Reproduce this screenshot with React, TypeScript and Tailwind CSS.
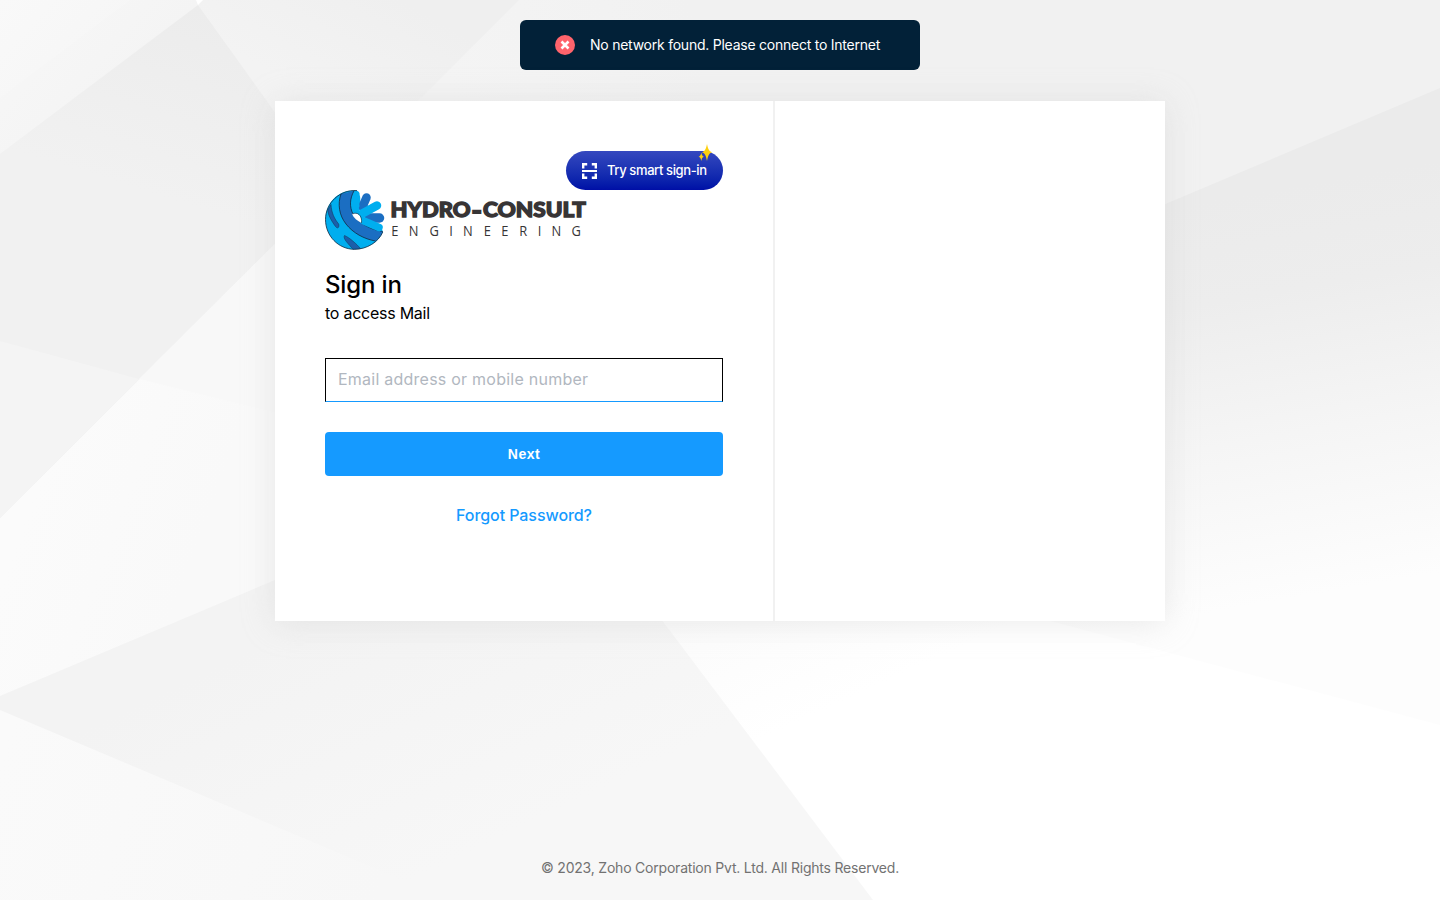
import React from "react";

function Backdrop() {
  return (
    <svg className="absolute inset-0 -z-10 h-full w-full" viewBox="0 0 1440 900" preserveAspectRatio="none" aria-hidden="true">
      <defs>
        <linearGradient id="peak" gradientUnits="userSpaceOnUse" x1="198" y1="5" x2="140" y2="190">
          <stop offset="0" stopColor="#ececec" />
          <stop offset="1" stopColor="#f1f1f1" />
        </linearGradient>
        <linearGradient id="corner" gradientUnits="userSpaceOnUse" x1="0" y1="0" x2="110" y2="100">
          <stop offset="0" stopColor="#f8f8f8" />
          <stop offset="1" stopColor="#f4f4f4" />
        </linearGradient>
        <linearGradient id="facet" gradientUnits="userSpaceOnUse" x1="400" y1="0" x2="340" y2="110">
          <stop offset="0" stopColor="#efefef" />
          <stop offset="1" stopColor="#f3f3f3" />
        </linearGradient>
        <linearGradient id="sky" gradientUnits="userSpaceOnUse" x1="450" y1="100" x2="700" y2="50">
          <stop offset="0" stopColor="#f4f4f4" />
          <stop offset="1" stopColor="#f1f1f1" />
        </linearGradient>
        <linearGradient id="right" gradientUnits="userSpaceOnUse" x1="1270" y1="190" x2="1340" y2="590">
          <stop offset="0" stopColor="#ebebeb" />
          <stop offset="0.25" stopColor="#ededed" />
          <stop offset="0.6" stopColor="#f5f5f5" />
          <stop offset="1" stopColor="#fdfdfd" />
        </linearGradient>
        <linearGradient id="lower" gradientUnits="userSpaceOnUse" x1="700" y1="610" x2="760" y2="740">
          <stop offset="0" stopColor="#fbfbfb" />
          <stop offset="1" stopColor="#ffffff" />
        </linearGradient>
        <linearGradient id="ground" gradientUnits="userSpaceOnUse" x1="250" y1="650" x2="370" y2="900">
          <stop offset="0" stopColor="#f3f3f3" />
          <stop offset="1" stopColor="#f7f7f7" />
        </linearGradient>
        <linearGradient id="leftLight" gradientUnits="userSpaceOnUse" x1="40" y1="480" x2="200" y2="540">
          <stop offset="0" stopColor="#fbfbfb" />
          <stop offset="1" stopColor="#f9f9f9" />
        </linearGradient>
        <linearGradient id="foot" gradientUnits="userSpaceOnUse" x1="0" y1="760" x2="380" y2="890">
          <stop offset="0" stopColor="#fafafa" />
          <stop offset="1" stopColor="#f7f7f7" />
        </linearGradient>
      </defs>
      <rect width="1440" height="900" fill="url(#sky)" />
      <polygon points="0,696 1440,88 1440,900 0,900" fill="url(#right)" />
      <polygon points="0,696 500,474 1440,725 1440,900 0,900" fill="url(#lower)" />
      <polygon points="0,518 330,189 500,485 0,696" fill="url(#leftLight)" />
      <polygon points="0,154 203,0 0,0" fill="url(#corner)" />
      <polygon points="0,98 130,0 0,0" fill="#ffffff" fillOpacity="0.15" />
      <polygon points="203,0 519,0 330,189 198,5" fill="url(#facet)" />
      <polygon points="0,154 198,5 330,189 0,518" fill="url(#peak)" />
      <polygon points="0,341 139,379 0,518" fill="#f4f4f4" />
      <polygon points="139,379 275,413 275,244" fill="#f8f8f8" />
      <polygon points="196,0 203,0 198,5" fill="#ffffff" />
      <polygon points="0,696 500,485 560,485 873,900 0,900" fill="url(#ground)" />
      <polygon points="0,710 450,900 0,900" fill="url(#foot)" />
    </svg>
  );
}

function Logo() {
  return (
    <svg className="block" width="262" height="60" viewBox="0 0 262 60" role="img" aria-label="Hydro-Consult Engineering">
      <path d="M30 .6C13-.2 .5 13 .5 29.500C.5 46 13.500 59.300 29.500 59.300C43 59.300 54 51.500 57.800 42L56.500 37L42 33L33 23L35 11L34.500 3C33.500 1 32 .6 30 .6Z" fill="#00aeef" />
      <path d="M29 .8L16 4C12.500 14 14 25 21 34C28 43 39 49 50.500 51C54 48.500 56.500 45 57.800 41.500C45 39.500 33 33 28 24C24.500 17 25 8 29 .8Z" fill="#1b6ec2" />
      <path d="M29 .8C24.500 9 24.500 17 28 24C33 33 45 39.500 57.800 41.500M16 4C12.500 14 14 25 21 34C28 43 39 49 50.500 51M32 .6C15-.8 .5 13 .5 29.500C.5 46 13.500 59.300 29.500 59.300C42 59.300 53.500 52 57.800 42" fill="none" stroke="#122a40" strokeWidth=".8" />
      <path d="M6 14.500C6.500 23 9.500 29 13.700 34C14.500 37 13 39.500 10.500 36.500C6.500 31 3 25 2.800 20Z" fill="#1b5eaa" stroke="#12304d" strokeWidth=".5" />
      <path d="M19.500 45.500C17.500 48.500 23.500 54 28 59.200L35.500 58.500C31.500 54 24.500 47.500 19.500 45.500Z" fill="#1b5eaa" stroke="#12304d" strokeWidth=".5" />
      <g fill="none" strokeLinecap="round">
        <path d="M32 8V18" stroke="#00aeef" strokeWidth="6.500" />
        <path d="M38.500 14.500L41.500 7.500" stroke="#1b6ec2" strokeWidth="8.500" />
        <path d="M37 18L39.500 16" stroke="#1b6ec2" strokeWidth="6" />
        <path d="M44 28H54.500" stroke="#1b6ec2" strokeWidth="9.500" />
        <path d="M35.500 24.500L52 15.500" stroke="#00aeef" strokeWidth="8.500" />
        <path d="M39 31L54 37.500" stroke="#00aeef" strokeWidth="7.500" />
      </g>
      <path d="M27 24C32 21.500 37 25 36.500 33C32.500 31 28.500 28 27 24Z" fill="#fff" />
      <path d="M27.500 24C32 21.500 37.500 25 36.500 33" fill="none" stroke="#18344c" strokeWidth=".7" />
      <g fill="#373435" stroke="#373435" strokeWidth="1.300" className="font-['Lato',sans-serif] text-[20.500px] font-black">
        <text x="65.500" y="27.400" textLength="80" lengthAdjust="spacingAndGlyphs">HYDRO</text>
        <text x="147" y="28" textLength="9.500" lengthAdjust="spacingAndGlyphs" strokeWidth="2">-</text>
        <text x="158" y="27.400" textLength="103" lengthAdjust="spacingAndGlyphs">CONSULT</text>
      </g>
      <g transform="scale(.86 1)">
        <text y="46" fill="#373435" className="font-['Open_Sans',sans-serif] text-[15px]">
          {[77, 97.5, 121.500, 144.500, 160.500, 184.500, 205, 226, 247.500, 263.500, 286.500].map((x, i) => (
            <tspan key={i} x={x}>{"ENGINEERING"[i]}</tspan>
          ))}
        </text>
      </g>
    </svg>
  );
}

function SmartSignIn() {
  return (
    <button className="relative flex h-[39px] w-[157px] items-center gap-2.5 rounded-full bg-gradient-to-b from-[#3548bf] to-[#000ea6] pl-4 text-white">
      <svg width="15" height="16" viewBox="0 0 15 16" fill="none" stroke="white" strokeWidth="2.4">
        <path d="M1.200 5.500V1.200H5.200M9.800 1.200H13.800V5.500M1.200 10.500V14.800H5.200M9.800 14.800H13.800V10.500" />
        <path d="M0 8H15" strokeWidth="2" />
      </svg>
      <span className="mb-px whitespace-nowrap text-[13px] font-medium leading-4 tracking-[-0.390px]">Try smart sign-in</span>
      <svg className="absolute -top-[7px] right-[11px]" width="14" height="18" viewBox="0 0 14 18" fill="#fdd00d">
        <path d="M9 0C10 5 11 7.200 14 8.200C11 9.300 10 11.500 9 17C8 11.500 7 9.300 4 8.200C7 7.200 8 5 9 0Z" />
        <path d="M3.300 8.500C3.900 11.200 4.300 12 6 12.700C4.300 13.400 3.900 14 3.300 17C2.700 14 2.300 13.400 .6 12.700C2.300 12 2.700 11.200 3.300 8.500Z" />
      </svg>
    </button>
  );
}

export default function App() {
  return (
    <div className="relative isolate flex h-screen min-h-[900px] flex-col items-center overflow-hidden font-['Inter','Liberation_Sans',sans-serif]">
      <Backdrop />
      <div className="mt-5 flex h-[50px] w-[400px] shrink-0 items-center rounded-md bg-[#022138] pl-[35px] text-white">
        <svg width="20" height="20" viewBox="0 0 20 20">
          <circle cx="10" cy="10" r="10" fill="#ff646c" />
          <path d="M6.500 6.500L13.500 13.500M13.500 6.500L6.500 13.500" stroke="white" strokeWidth="2.600" />
        </svg>
        <span className="ml-[15px] whitespace-nowrap text-[14px] font-normal leading-5 tracking-[-0.240px]">No network found. Please connect to Internet</span>
      </div>

      <main className="mt-[31px] flex h-[520px] w-[890px] shrink-0 bg-white shadow-[0_2px_30px_#cccccc66]">
        <section className="flex w-[500px] shrink-0 flex-col border-r-2 border-[#f1f1f1] px-[50px] pt-[50px]">
          <div className="flex justify-end">
            <SmartSignIn />
          </div>
          <Logo />
          <h1 className="mt-5 text-[24px] font-medium leading-[30px] tracking-[-0.150px] text-black">Sign in</h1>
          <p className="mt-px text-[16px] leading-6 tracking-[-0.250px] text-black">to access Mail</p>
          <input
            className="mt-[33px] block h-11 w-full border border-black border-b-[#159aff] bg-white px-3 pb-0.5 text-[16px] font-normal tracking-[0.240px] outline-none placeholder:text-[#b1b7c0]"
            placeholder="Email address or mobile number"
            aria-label="Email address or mobile number"
          />
          <button className="mt-[30px] h-11 w-full shrink-0 rounded-[4px] bg-[#159aff] font-['Liberation_Sans',sans-serif] text-[14px] font-bold tracking-[0.500px] text-white">Next</button>
          <a className="mt-[27px] self-center whitespace-nowrap text-[16px] font-medium leading-6 tracking-[-0.070px] text-[#159aff]">Forgot Password?</a>
        </section>
      </main>

      <footer className="mt-auto mb-[22px] whitespace-nowrap text-[14px] leading-5 tracking-[-0.210px] text-[#727272]">© 2023, Zoho Corporation Pvt. Ltd. All Rights Reserved.</footer>
    </div>
  );
}
